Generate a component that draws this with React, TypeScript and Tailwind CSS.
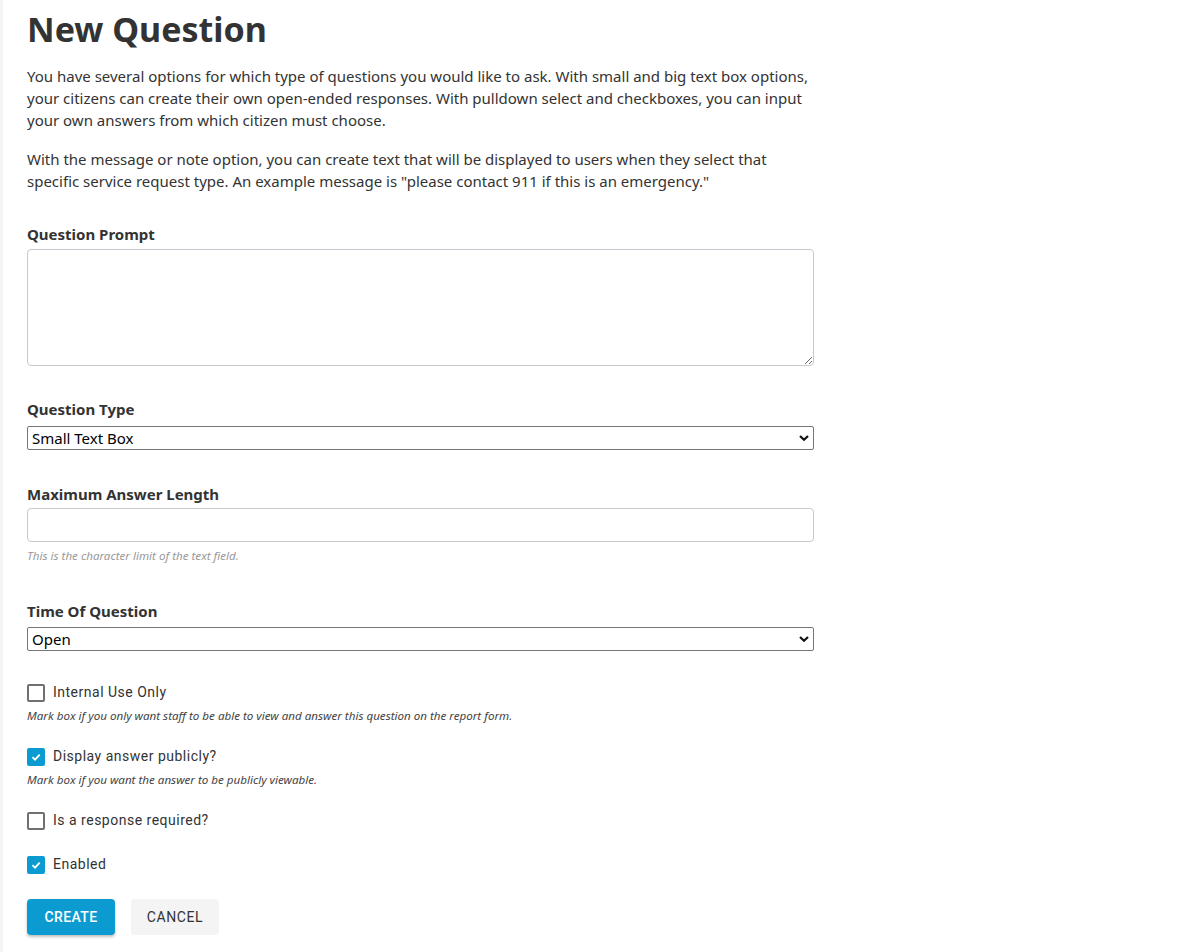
import React from "react";

const body = { fontFamily: '"Noto Sans", "Open Sans", sans-serif' };
const roboto = { fontFamily: 'Roboto, "Noto Sans", sans-serif' };

function Chevron() {
  return (
    <svg width="10" height="7" viewBox="0 0 10 7" className="absolute right-[5px] top-1/2 -translate-y-1/2 pointer-events-none">
      <path d="M1 1.5 L5 5.2 L9 1.5" fill="none" stroke="#111" strokeWidth="2.2" />
    </svg>
  );
}

function Select({ value }: { value: string }) {
  return (
    <div className="relative w-full">
      <select
        defaultValue={value}
        className="block w-full h-[24px] appearance-none border border-[#767676] rounded-[2px] bg-white pl-[4px] text-[15px] leading-[20px] text-black outline-none"
        style={{ fontFamily: '"Noto Sans", sans-serif' }}
      >
        <option>{value}</option>
      </select>
      <Chevron />
    </div>
  );
}

function Check({ checked, label }: { checked: boolean; label: string }) {
  return (
    <div className="flex items-center gap-[8px]" style={roboto}>
      {checked ? (
        <span className="w-[18px] h-[18px] rounded-[2px] bg-[#0c9bd0] flex items-center justify-center">
          <svg width="12" height="12" viewBox="0 0 12 12">
            <path d="M2.4 6.2 L5 8.7 L9.7 3.6" fill="none" stroke="#fff" strokeWidth="1.8" />
          </svg>
        </span>
      ) : (
        <span className="w-[18px] h-[18px] rounded-[2px] border-2 border-[#707070] bg-white" />
      )}
      <span className="text-[14px] text-[#333] tracking-[0.5px]">{label}</span>
    </div>
  );
}

function Help({ children }: { children: React.ReactNode }) {
  return (
    <p className="text-[11.6px] italic text-[#444] mt-[6px] leading-[14px]" style={body}>
      {children}
    </p>
  );
}

export default function App() {
  return (
    <div className="min-h-[952px] bg-white flex">
      <div className="w-[3px] bg-[#f4f4f4]" />
      <div className="pl-[24px] w-[811px] text-[#333]" style={body}>
        <h1 className="text-[34px] font-bold leading-[44px] mt-[7px] text-[#333]">New Question</h1>
        <p className="text-[15px] leading-[22px] mt-[14px] text-[#333]">
          You have several options for which type of questions you would like to ask. With small and big text box options, your citizens can create their own open-ended responses. With pulldown select and checkboxes, you can input your own answers from which citizen must choose.
        </p>
        <p className="text-[15px] leading-[22px] mt-[17px] text-[#333]">
          With the message or note option, you can create text that will be displayed to users when they select that specific service request type. An example message is "please contact 911 if this is an emergency."
        </p>

        <label className="block text-[15px] font-bold mt-[31px] leading-[22px]">Question Prompt</label>
        <textarea className="block w-full h-[117px] mt-[4px] border border-[#c8c8d0] rounded-[4px] resize-y outline-none" />

        <label className="block text-[15px] font-bold mt-[32px] leading-[22px]">Question Type</label>
        <div className="mt-[6px]">
          <Select value="Small Text Box" />
        </div>

        <label className="block text-[15px] font-bold mt-[33px] leading-[22px]">Maximum Answer Length</label>
        <input className="block w-full h-[34px] mt-[3px] border border-[#c8c8d0] rounded-[4px] outline-none" />
        <p className="text-[11.6px] italic text-[#999] mt-[7px] leading-[14px]">This is the character limit of the text field.</p>

        <label className="block text-[15px] font-bold mt-[37px] leading-[22px]">Time Of Question</label>
        <div className="mt-[5px]">
          <Select value="Open" />
        </div>

        <div className="mt-[31px]">
          <Check checked={false} label="Internal Use Only" />
          <Help>Mark box if you only want staff to be able to view and answer this question on the report form.</Help>
        </div>
        <div className="mt-[23px]">
          <Check checked={true} label="Display answer publicly?" />
          <Help>Mark box if you want the answer to be publicly viewable.</Help>
        </div>
        <div className="mt-[23px]">
          <Check checked={false} label="Is a response required?" />
        </div>
        <div className="mt-[23px]">
          <Check checked={true} label="Enabled" />
        </div>

        <div className="flex gap-[16px] mt-[24px]" style={roboto}>
          <button className="w-[88px] h-[36px] rounded-[4px] bg-[#0c9bd0] text-white text-[14px] font-medium tracking-[0.4px] shadow-[0_2px_3px_rgba(0,0,0,0.25)]">
            CREATE
          </button>
          <button className="w-[88px] h-[36px] rounded-[4px] bg-[#f4f4f4] text-[#333] text-[14px] tracking-[0.6px]">
            CANCEL
          </button>
        </div>
      </div>
    </div>
  );
}
